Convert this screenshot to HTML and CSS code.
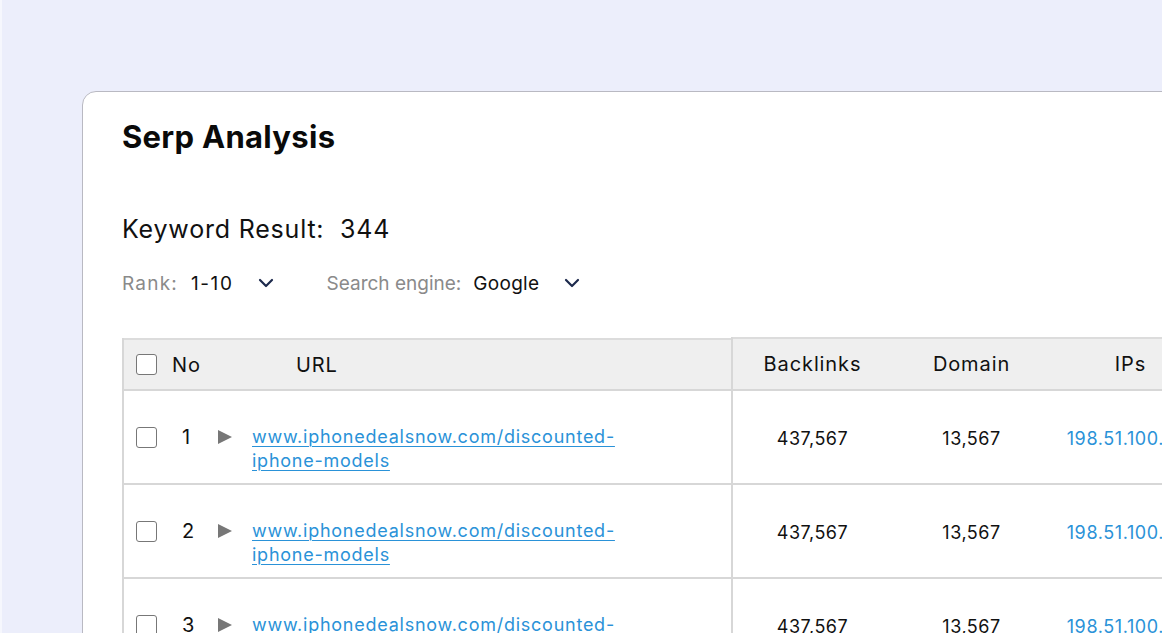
FILE: index.html
```html
<!DOCTYPE html>
<html>
<head>
<meta charset="utf-8">
<link rel="stylesheet" href="styles.css">
</head>
<body>
<div class="page">
  <div class="card">
    <h1 class="title">Serp Analysis</h1>
    <div class="result">Keyword Result:&nbsp; 344</div>
    <div class="filters">
      <div class="filter">
        <span class="flabel rank">Rank:</span>
        <span class="fvalue one">1-10</span>
        <svg class="chev" width="16" height="10" viewBox="0 0 16 10"><path d="M2 2 L8 8 L14 2" fill="none" stroke="#1d2a4d" stroke-width="2.2" stroke-linecap="round" stroke-linejoin="round"/></svg>
      </div>
      <div class="filter">
        <span class="flabel">Search engine:</span>
        <span class="fvalue">Google</span>
        <svg class="chev" width="16" height="10" viewBox="0 0 16 10"><path d="M2 2 L8 8 L14 2" fill="none" stroke="#1d2a4d" stroke-width="2.2" stroke-linecap="round" stroke-linejoin="round"/></svg>
      </div>
    </div>
    <div class="tables">
      <div class="tleft">
        <div class="thead lhead">
          <span class="cb"></span>
          <span class="hno">No</span>
          <span class="hurl">URL</span>
        </div>
        <div class="lrow">
          <span class="cb"></span>
          <span class="num">1</span>
          <span class="tri"></span>
          <a class="link" href="#">www.iphonedealsnow.com/discounted-<br>iphone-models</a>
        </div>
        <div class="lrow">
          <span class="cb"></span>
          <span class="num">2</span>
          <span class="tri"></span>
          <a class="link" href="#">www.iphonedealsnow.com/discounted-<br>iphone-models</a>
        </div>
        <div class="lrow">
          <span class="cb"></span>
          <span class="num">3</span>
          <span class="tri"></span>
          <a class="link" href="#">www.iphonedealsnow.com/discounted-<br>iphone-models</a>
        </div>
      </div>
      <div class="tright">
        <div class="thead rhead">
          <span class="col">Backlinks</span>
          <span class="col">Domain</span>
          <span class="col">IPs</span>
        </div>
        <div class="rrow">
          <span class="col">437,567</span>
          <span class="col">13,567</span>
          <span class="col ip">198.51.100.142</span>
        </div>
        <div class="rrow">
          <span class="col">437,567</span>
          <span class="col">13,567</span>
          <span class="col ip">198.51.100.142</span>
        </div>
        <div class="rrow">
          <span class="col">437,567</span>
          <span class="col">13,567</span>
          <span class="col ip">198.51.100.142</span>
        </div>
      </div>
    </div>
  </div>
</div>
</body>
</html>
```
FILE: styles.css
```css
* { box-sizing: border-box; }
html, body {
  margin: 0;
  padding: 0;
  width: 1162px;
  height: 633px;
  overflow: hidden;
}
body {
  background: #eceefb;
  font-family: "Inter", "Noto Sans", sans-serif;
  color: #111;
}
.page {
  padding: 91px 0 0 80px;
  border-left: 2px solid #f6f7fd;
  height: 633px;
}
.card {
  width: 1200px;
  height: 700px;
  background: #fff;
  border: 1px solid #b9b9c2;
  border-radius: 14px 0 0 0;
  padding: 0 0 0 39px;
}
.title {
  margin: 0;
  padding-top: 25px;
  font-size: 31px;
  line-height: 40px;
  font-weight: 700;
  letter-spacing: 0.3px;
  color: #0a0a0a;
}
.result {
  margin-top: 56px;
  font-size: 25px;
  line-height: 32px;
  color: #111;
  letter-spacing: 0.8px;
}
.filters {
  display: flex;
  gap: 53px;
  margin-top: 25px;
  align-items: center;
  height: 26px;
}
.filter {
  display: flex;
  align-items: center;
}
.flabel {
  font-size: 19px;
  color: #8a8a8a;
  margin-right: 12px;
  letter-spacing: 0;
}
.flabel.rank { letter-spacing: 1.2px; margin-right: 13px; }
.fvalue {
  font-size: 19px;
  color: #111;
  margin-right: 25px;
  letter-spacing: 0.3px;
}
.fvalue.one { letter-spacing: 1.6px; margin-right: 24px; }
.chev { display: block; }
.tables {
  display: flex;
  margin-top: 42px;
}
.tleft {
  width: 609px;
  border-left: 2px solid #d7d7d7;
}
.tright {
  width: 480px;
  margin-top: -1px;
  border-left: 2px solid #d7d7d7;
}
.thead {
  background: #efefef;
  border-top: 2px solid #dcdcdc;
  border-bottom: 2px solid #d7d7d7;
  height: 53px;
  display: flex;
  align-items: center;
  font-size: 20px;
  color: #111;
  letter-spacing: 0.9px;
}
.lhead { padding-left: 12px; }
.rhead { height: 54px; }
.cb {
  width: 21px;
  height: 21px;
  border: 1.5px solid #777;
  border-radius: 3px;
  background: #fff;
  flex: none;
}
.hno { margin-left: 15px; }
.hurl { margin-left: 95px; }
.lrow {
  height: 94px;
  border-bottom: 2px solid #d7d7d7;
  display: flex;
  align-items: flex-start;
  padding: 34px 0 0 12px;
}
.lrow .cb { margin-top: 2px; }
.num {
  width: 24px;
  margin-left: 25px;
  font-size: 20px;
  line-height: 24px;
}
.tri {
  width: 0;
  height: 0;
  border-top: 7px solid transparent;
  border-bottom: 7px solid transparent;
  border-left: 14px solid #777;
  margin: 5px 0 0 12px;
}
.link {
  margin-left: 20px;
  font-size: 18px;
  line-height: 24px;
  color: #2a92d8;
  text-decoration: underline;
  text-underline-offset: 3px;
  text-decoration-thickness: 1px;
  letter-spacing: 0.75px;
}
.rrow {
  height: 94px;
  border-bottom: 2px solid #d7d7d7;
  display: flex;
  align-items: center;
  font-size: 18px;
  padding-top: 2px;
  letter-spacing: 0.5px;
}
.col {
  width: 159px;
  text-align: center;
  flex: none;
  white-space: nowrap;
}
.ip { color: #2a92d8; letter-spacing: 0.6px; }
```
